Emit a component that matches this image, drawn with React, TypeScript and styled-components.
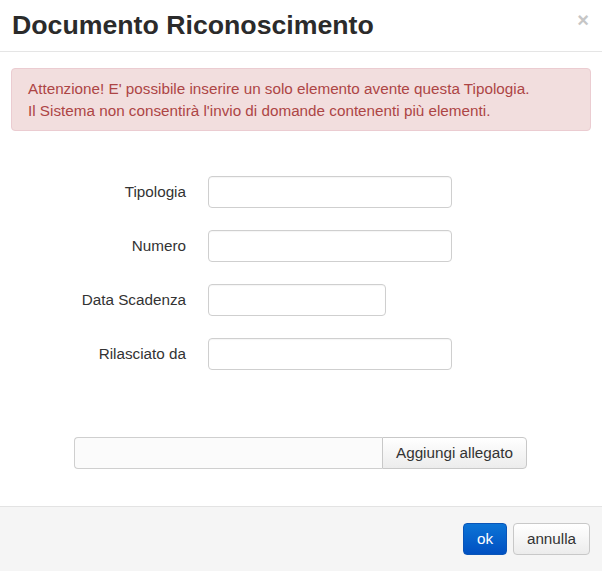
import React from "react";
import styled, { createGlobalStyle } from "styled-components";

const Global = createGlobalStyle`
  html, body { margin: 0; padding: 0; background: #fff; }
  body { font-family: "Liberation Sans", Arial, sans-serif; color: #333; }
  * { box-sizing: border-box; }
`;

const Modal = styled.div`
  width: 602px;
  height: 571px;
  display: flex;
  flex-direction: column;
  background: #fff;
`;

const Header = styled.div`
  height: 52px;
  display: flex;
  align-items: center;
  justify-content: space-between;
  padding: 0 13px 0 12px;
  border-bottom: 1px solid #e5e5e5;
`;

const Title = styled.h3`
  margin: 0;
  font-size: 26.7px;
  font-weight: bold;
  color: #2b2b2b;
  line-height: 30px;
  padding-bottom: 2px;
`;

const Close = styled.button`
  border: 0;
  background: none;
  padding: 0;
  font-family: "Liberation Sans", Arial, sans-serif;
  font-size: 20px;
  font-weight: bold;
  color: #c6c6c6;
  line-height: 20px;
  align-self: flex-start;
  margin-top: 10px;
`;

const Body = styled.div`
  flex: 1;
  display: flex;
  flex-direction: column;
  padding: 16px 11px 0 11px;
`;

const Alert = styled.div`
  background: #f2dede;
  border: 1px solid #ebccd1;
  border-radius: 4px;
  color: #ad4545;
  font-size: 15.25px;
  line-height: 21.5px;
  padding: 9px 16px 9px 16px;
`;

const Form = styled.div`
  display: flex;
  flex-direction: column;
  gap: 22px;
  margin-top: 45px;
`;

const Row = styled.div`
  display: flex;
  align-items: center;
  gap: 22px;
`;

const Label = styled.label`
  width: 175px;
  text-align: right;
  font-size: 15.25px;
  color: #333;
  padding-bottom: 2px;
`;

const Input = styled.div<{ $w: number }>`
  width: ${(p) => p.$w}px;
  height: 32px;
  border: 1px solid #cfcfcf;
  border-radius: 4px;
  background: #fff;
  box-shadow: inset 0 1px 1px rgba(0, 0, 0, 0.04);
`;

const FileRow = styled.div`
  display: flex;
  margin: 67px 0 0 63px;
  width: 453px;
  height: 32px;
`;

const FileField = styled.div`
  flex: 1;
  border: 1px solid #cfcfcf;
  border-right: 0;
  border-radius: 4px 0 0 4px;
  background: #fbfbfb;
`;

const FileButton = styled.button`
  width: 145px;
  height: 32px;
  border: 1px solid #c8c8c8;
  border-radius: 0 4px 4px 0;
  background: linear-gradient(#ffffff, #ececec);
  font-family: "Liberation Sans", Arial, sans-serif;
  font-size: 15.25px;
  color: #333;
  padding: 0 0 2px 0;
`;

const Footer = styled.div`
  height: 65px;
  border-top: 1px solid #e3e3e3;
  background: #f5f5f5;
  display: flex;
  justify-content: flex-end;
  align-items: flex-start;
  gap: 6px;
  padding: 16px 12px 0 0;
`;

const Btn = styled.button<{ $primary?: boolean }>`
  height: 32px;
  width: ${(p) => (p.$primary ? 44 : 77)}px;
  border-radius: 4px;
  font-family: "Liberation Sans", Arial, sans-serif;
  font-size: 15.25px;
  padding: 0 0 2px 0;
  border: 1px solid ${(p) => (p.$primary ? "#0a55b8" : "#c8c8c8")};
  color: ${(p) => (p.$primary ? "#fff" : "#333")};
  background: ${(p) =>
    p.$primary
      ? "linear-gradient(#0c74d6, #0050c2)"
      : "linear-gradient(#ffffff, #ececec)"};
`;

const fields: { label: string; w: number }[] = [
  { label: "Tipologia", w: 244 },
  { label: "Numero", w: 244 },
  { label: "Data Scadenza", w: 178 },
  { label: "Rilasciato da", w: 244 },
];

export default function App() {
  return (
    <>
      <Global />
      <Modal>
        <Header>
          <Title>Documento Riconoscimento</Title>
          <Close>×</Close>
        </Header>
        <Body>
          <Alert>
            Attenzione! E' possibile inserire un solo elemento avente questa Tipologia.
            <br />
            Il Sistema non consentirà l'invio di domande contenenti più elementi.
          </Alert>
          <Form>
            {fields.map((f) => (
              <Row key={f.label}>
                <Label>{f.label}</Label>
                <Input $w={f.w} />
              </Row>
            ))}
          </Form>
          <FileRow>
            <FileField />
            <FileButton>Aggiungi allegato</FileButton>
          </FileRow>
        </Body>
        <Footer>
          <Btn $primary>ok</Btn>
          <Btn>annulla</Btn>
        </Footer>
      </Modal>
    </>
  );
}
